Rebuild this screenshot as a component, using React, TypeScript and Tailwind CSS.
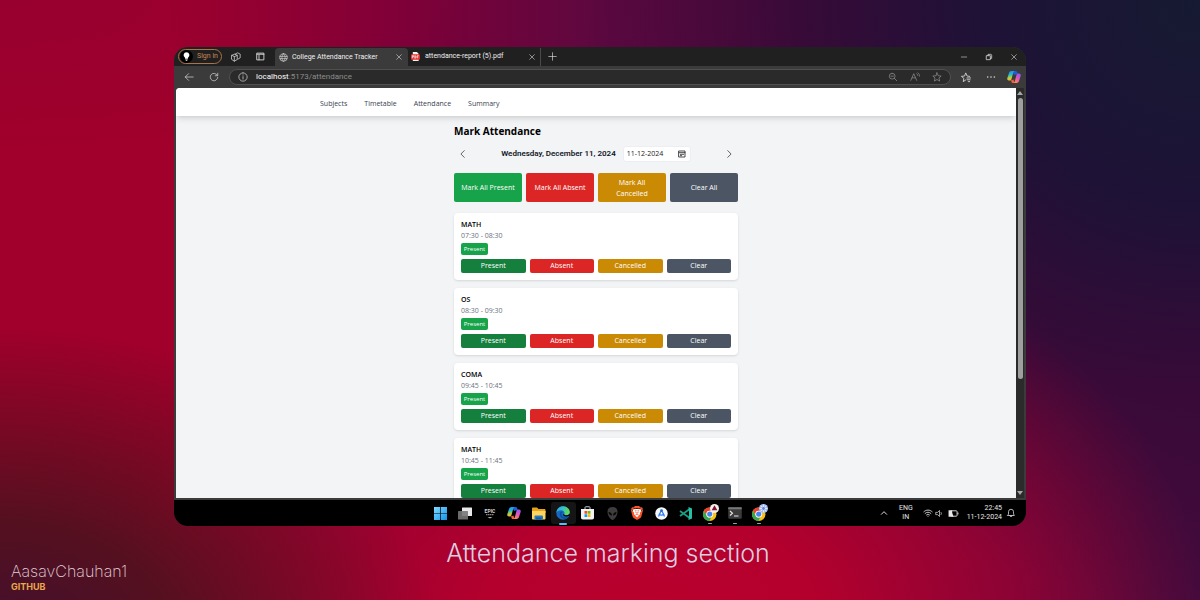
import type { ReactNode } from "react";
import { SiBrave } from "react-icons/si";

type Lecture = { subject: string; time: string };

const lectures: Lecture[] = [
  { subject: "MATH", time: "07:30 - 08:30" },
  { subject: "OS", time: "08:30 - 09:30" },
  { subject: "COMA", time: "09:45 - 10:45" },
  { subject: "MATH", time: "10:45 - 11:45" },
];

const links = ["Subjects", "Timetable", "Attendance", "Summary"];

function Line({ d, className = "size-[10px]", width = 1.8 }: { d: string; className?: string; width?: number }) {
  return (
    <svg viewBox="0 0 24 24" className={className} fill="none" stroke="currentColor" strokeWidth={width} strokeLinecap="round" strokeLinejoin="round" aria-hidden="true">
      <path d={d} />
    </svg>
  );
}

const paths = {
  close: "M5 5l14 14M19 5L5 19",
  plus: "M12 2v20M2 12h20",
  min: "M4 12h16",
  restore: "M5 8h11v12H5zM9 8V4h8a3 3 0 0 1 3 3v9h-4",
  back: "M22 12H3M11 4l-8 8 8 8",
  refresh: "M20 8A9 9 0 1 0 21 13M21 3v6h-6",
  info: "M12 2a10 10 0 1 0 0 20 10 10 0 0 0 0-20M12 11v6M12 7v.5",
  zoom: "M10 3a7 7 0 1 0 0 14 7 7 0 0 0 0-14M15 15l6 6M7 10h6",
  read: "M2 20L9 4l7 16M5 14h8M16 4c2 1 3 3 3 5M19 2c3 2 4 5 4 8",
  star: "M12 2l3 7 7 .7-5.300 4.800 1.600 7.300L12 18l-6.300 3.800 1.600-7.300L2 9.700 9 9z",
  favs: "M13 17l-6 4 1.500-7L3 9.500l7-.7L12.500 2l3 6.800 5.500.7M15 13h8M16 17h6M18 21h3",
  globe: "M12 2a10 10 0 1 0 0 20 10 10 0 0 0 0-20M2.500 9h19M2.500 15h19M12 2c-6 6-6 14 0 20M12 2c6 6 6 14 0 20",
  left: "M15 4l-8 8 8 8",
  right: "M9 4l8 8-8 8",
  up: "M4 16l8-8 8 8",
  bell: "M4 18h16l-2-4V9a6 6 0 0 0-12 0v5zM9.500 18.500a2.500 2.500 0 0 0 5 0",
  wifi: "M2 9c6-5.500 14-5.500 20 0M5 13c4-4 10-4 14 0M8.500 16.500c2-2 5-2 7 0M12 19.500v.5",
  sound: "M3 9h4l5-5v16l-5-5H3zM16 9c1.500 2 1.500 4 0 6",
  calendar: "M3 3h18v18H3zM3 8h18M7 13h10M7 17h4",
};

function Copilot({ id }: { id: string }) {
  return (
    <svg viewBox="0 0 28 28" className="size-[14px]" aria-hidden="true">
      <defs>
        <linearGradient id={`${id}a`} x1="0" y1="0" x2="0.2" y2="1">
          <stop offset="0" stopColor="#1c8af0" />
          <stop offset="0.45" stopColor="#25b8d0" />
          <stop offset="0.75" stopColor="#b5cf3c" />
          <stop offset="1" stopColor="#ffb02e" />
        </linearGradient>
        <linearGradient id={`${id}b`} x1="0.7" y1="0" x2="0.3" y2="1">
          <stop offset="0" stopColor="#8a5cf5" />
          <stop offset="0.5" stopColor="#e356b5" />
          <stop offset="1" stopColor="#ff8a4a" />
        </linearGradient>
      </defs>
      <path fill="#1b5fd8" d="M9 2h8c2 0 3 1 3.600 3l1 4h-5l-2 1z" />
      <path fill={`url(#${id}a)`} d="M9 2h6c-2 1-2.500 3-3 5l-3 11c-.6 2-1.500 3-3.500 3H4c-3 0-4-2.500-3.300-5L4 6c.8-2.500 2.500-4 5-4z" />
      <path fill="#f2613f" d="M11 26h8c-3 0-4-1-4.800-3l-1.400-4-5 2 1 2c.6 2 1 3 2.200 3z" />
      <path fill={`url(#${id}b)`} d="M19 26h-6c2-1 2.500-3 3-5l3-11c.6-2 1.500-3 3.500-3H24c3 0 4 2.500 3.300 5L24 22c-.8 2.500-2.500 4-5 4z" />
    </svg>
  );
}

function Chrome({ children }: { children: ReactNode }) {
  return (
    <svg viewBox="0 0 32 32" className="size-[18px]" aria-hidden="true">
      <g transform="translate(3 5)">
        <circle cx="12.500" cy="13" r="12" fill="#fbc116" />
        <path fill="#ea4335" d="M2.100 7A12 12 0 0 1 22.900 7H12.500a6 6 0 0 0-5.200 9z" />
        <path fill="#34a853" d="M2.100 7l5.200 9a6 6 0 0 0 8.200 2.200L12 25A12 12 0 0 1 2.100 7z" />
        <circle cx="12.500" cy="13" r="6" fill="#fff" />
        <circle cx="12.500" cy="13" r="4.600" fill="#4285f4" />
      </g>
      {children}
    </svg>
  );
}

const taskIcons: { name: string; icon: ReactNode; mark?: "active" | "open" }[] = [
  {
    name: "Start",
    icon: (
      <svg viewBox="0 0 26 26" className="size-[13px]">
        <defs>
          <linearGradient id="win" x1="0" y1="0" x2="1" y2="1">
            <stop offset="0" stopColor="#7fdcff" />
            <stop offset="1" stopColor="#1193ec" />
          </linearGradient>
        </defs>
        <path fill="url(#win)" d="M0 0h12.300v12.300H0zM13.700 0H26v12.300H13.700zM0 13.700h12.300V26H0zM13.700 13.700H26V26H13.700z" />
      </svg>
    ),
  },
  {
    name: "Task view",
    icon: (
      <svg viewBox="0 0 28 26" className="h-[13px] w-[14px]">
        <rect x="8" y="1" width="20" height="17" rx="1" fill="#e8e8e8" />
        <rect x="0" y="8" width="20" height="17" rx="1" fill="#777" opacity="0.9" />
      </svg>
    ),
  },
  {
    name: "Epic Games",
    icon: (
      <svg viewBox="0 0 24 28" className="h-[14px] w-[12px]">
        <text x="12" y="13" textAnchor="middle" fontSize="10" fontWeight="700" fill="#d6d6d6">
          EPIC
        </text>
        <path d="M4 17h16" stroke="#8a8a8a" strokeWidth="2.500" strokeDasharray="3 1" />
        <path d="M7 22h10l-5 3z" fill="#b0b0b0" />
      </svg>
    ),
  },
  { name: "Copilot", icon: <Copilot id="task" /> },
  {
    name: "File Explorer",
    icon: (
      <svg viewBox="0 0 28 26" className="h-[13px] w-[14px]">
        <path fill="#e5a31c" d="M0 3c0-1 1-2 2-2h8l3 3h12c1 0 2 1 2 2v6H0z" />
        <path fill="#ffd45c" d="M0 8h27v15c0 1-1 2-2 2H2c-1 0-2-1-2-2z" />
        <path fill="#2479c8" d="M5 19c0-1 1-2 2-2h13c1 0 2 1 2 2v6H5z" />
        <path fill="#175a9c" d="M8 21h11v4H8z" />
      </svg>
    ),
  },
  {
    name: "Edge",
    mark: "active",
    icon: (
      <svg viewBox="0 0 28 28" className="size-[14px]">
        <defs>
          <linearGradient id="edge" x1="0" y1="0" x2="1" y2="0.3">
            <stop offset="0" stopColor="#2aa8e8" />
            <stop offset="0.5" stopColor="#35c1c8" />
            <stop offset="1" stopColor="#62d957" />
          </linearGradient>
        </defs>
        <circle cx="14" cy="14" r="13.500" fill="#1668c0" />
        <path fill="url(#edge)" d="M.6 14C1 6 7 .5 14 .5S27.500 6 27.500 12c0 4-3 6.500-7 6.500-3 0-4.500-1-4-2.500 1-2 .5-6-4-7C7 8 2 10 .6 14z" />
        <path fill="#0d4f9e" d="M9 12c-4 5 0 13 8 14 4 .5 7-2 9-5-6 3-15 2-15-5 0-2 .8-3 2-4-1.500-1-3-1-4 0z" />
        <path fill="#000" d="M15 16c-2 2 1 5 5 5 3 0 6-1 8-3l-1-2c-2 2-4 2.500-7 2.500s-4-1-3.500-2.500z" />
      </svg>
    ),
  },
  {
    name: "Microsoft Store",
    icon: (
      <svg viewBox="0 0 26 28" className="h-[14px] w-[13px]">
        <path d="M8 7V3c0-1 .6-1.500 1.500-1.500h7c1 0 1.500.5 1.500 1.500v4" fill="none" stroke="#bfc9d4" strokeWidth="2" />
        <path fill="#f2f2f2" d="M0 6h26v17c0 2-1 4-4 4H4c-3 0-4-2-4-4z" />
        <path fill="#f25022" d="M7 10h5.500v5.500H7z" />
        <path fill="#7fba00" d="M13.500 10H19v5.500h-5.500z" />
        <path fill="#00a4ef" d="M7 16.500h5.500V22H7z" />
        <path fill="#ffb900" d="M13.500 16.500H19V22h-5.500z" />
      </svg>
    ),
  },
  {
    name: "Alienware",
    icon: (
      <svg viewBox="0 0 22 26" className="h-[13px] w-[11px]">
        <path fill="#3d3d3d" d="M11 0C4 0 1 4 1 10c0 7 6 15 10 16 4-1 10-9 10-16 0-6-3-10-10-10z" />
        <path fill="#080808" d="M3 10c4 0 7 3 7 7-4 0-7-3-7-7zM19 10c-4 0-7 3-7 7 4 0 7-3 7-7z" />
      </svg>
    ),
  },
  {
    name: "Brave",
    icon: (
      <span className="relative flex">
        <svg viewBox="0 0 24 24" className="absolute inset-0 size-[14px]">
          <path fill="#fff" d="M6 5h12l2 5-3 9-5 3-5-3-3-9z" />
        </svg>
        <SiBrave className="relative size-[14px] text-[#fb542b]" />
      </span>
    ),
  },
  {
    name: "Android Studio",
    icon: (
      <svg viewBox="0 0 26 26" className="size-[13px]">
        <circle cx="13" cy="13" r="12.500" fill="#f4f7fb" />
        <path fill="none" stroke="#2f7df0" strokeWidth="2.500" d="M13 6L7 19M13 6l6 13M7.500 14c3 3 8 3 11 0" />
        <circle cx="13" cy="7" r="2.600" fill="#2464c8" />
      </svg>
    ),
  },
  {
    name: "VS Code Insiders",
    icon: (
      <svg viewBox="0 0 26 26" className="size-[13px]">
        <path fill="none" stroke="#1b9c83" strokeWidth="3.600" strokeLinejoin="round" d="M20 5L2 18M20 21L2 8" />
        <path fill="#24bfa5" d="M19 0l7 3v20l-7 3v-6.500l1-.5V7l-1-.5z" />
      </svg>
    ),
  },
  {
    name: "Chrome",
    mark: "open",
    icon: (
      <Chrome>
        <circle cx="24" cy="8" r="8" fill="#f5eeee" />
        <path fill="#7d1233" d="M24 2l5 9H19z" />
      </Chrome>
    ),
  },
  {
    name: "Terminal",
    mark: "open",
    icon: (
      <svg viewBox="0 0 28 24" className="h-[12px] w-[14px]">
        <rect x="0.500" y="0.500" width="27" height="23" rx="2" fill="#3c3c3c" />
        <rect x="0.500" y="0.500" width="27" height="4" rx="1" fill="#777" />
        <path fill="none" stroke="#e8e8e8" strokeWidth="2.200" d="M4 8l5 4.500L4 17M12 18h9" />
      </svg>
    ),
  },
  {
    name: "Chrome profile",
    mark: "open",
    icon: (
      <Chrome>
        <circle cx="24" cy="8" r="8" fill="#a9bff0" />
        <path d="M24 1v14M17 8h14M19 3l10 10M29 3L19 13" stroke="#e3ebff" strokeWidth="1.600" />
        <circle cx="24" cy="8" r="2.500" fill="#5c80d8" />
      </Chrome>
    ),
  },
];

function IconButton({ label, className, children }: { label: string; className: string; children: ReactNode }) {
  return (
    <button type="button" aria-label={label} className={`flex shrink-0 items-center justify-center ${className}`}>
      {children}
    </button>
  );
}

function TabStrip() {
  return (
    <div className="flex h-[19px] shrink-0 items-center bg-[#202020] pl-1 text-[#d8d8d8]">
      <button type="button" className="flex h-[15px] w-11 shrink-0 items-center gap-1 rounded-full border border-[#a8744a] pl-px text-[7px] whitespace-nowrap text-[#c98a56]">
        <svg viewBox="0 0 24 24" className="size-[13px] shrink-0" aria-hidden="true">
          <circle cx="12" cy="12" r="12" fill="#000" />
          <path fill="#fff" d="M12 4a5.500 5.500 0 0 1 3 10l-.5 2h-5L9 14a5.500 5.500 0 0 1 3-10zM9.500 17.500h5L13 20h-2z" />
        </svg>
        Sign in
      </button>
      <IconButton label="Workspaces" className="ml-0.5 w-6">
        <Line d="M10 5l6-3 6 3v9l-5 3M2 8l7-3 6 3v10l-7 4-6-4zM2 8l6 3 7-3M8 11v11" />
      </IconButton>
      <IconButton label="Tab actions" className="w-6">
        <Line d="M3 3h18v18H3zM3 6h18M8 8v13" className="size-[9px]" width={2.4} />
      </IconButton>
      <div className="ml-[3px] flex h-[18px] w-[133px] items-center gap-1 self-end rounded-t-[4px] bg-[#3b3b3b] pr-[5px] pl-1">
        <Line d={paths.globe} className="size-[9px]" />
        <span className="text-[7px] whitespace-nowrap text-[#f0f0f0]">College Attendance Tracker</span>
        <IconButton label="Close tab" className="ml-auto">
          <Line d={paths.close} className="size-[8px]" />
        </IconButton>
      </div>
      <div className="flex h-[18px] w-[133px] items-center gap-[5px] border-r border-[#4a4a4a] pr-1 pl-[3px]">
        <svg viewBox="0 0 20 20" className="size-[9px] shrink-0" aria-hidden="true">
          <path fill="#f2f2f2" d="M4 0h9l4 4v16H4z" />
          <rect y="5" width="20" height="12" rx="2" fill="#e5322d" />
          <path stroke="#fff" strokeWidth="1.500" fill="none" d="M3 14V8h2.500v3H3M8.500 8v6c4 0 4-6 0-6zM14 14V8h3M14 11h2.500" />
        </svg>
        <span className="text-[7px] whitespace-nowrap text-[#f0f0f0]">attendance-report (5).pdf</span>
        <IconButton label="Close tab" className="ml-auto">
          <Line d={paths.close} className="size-[8px]" />
        </IconButton>
      </div>
      <IconButton label="New tab" className="w-[22px]">
        <Line d={paths.plus} className="size-[9px]" />
      </IconButton>
      <div className="ml-auto flex">
        <IconButton label="Minimize" className="w-[25px]">
          <Line d={paths.min} className="size-[8px]" />
        </IconButton>
        <IconButton label="Restore" className="w-[25px]">
          <Line d={paths.restore} className="size-[8px]" width={2.4} />
        </IconButton>
        <IconButton label="Close window" className="w-[25px]">
          <Line d={paths.close} className="size-[8px]" />
        </IconButton>
      </div>
    </div>
  );
}

function AddressBar() {
  return (
    <div className="flex h-[22px] shrink-0 items-center bg-[#3b3b3b] px-0.5 text-[#d0d0d0]">
      <IconButton label="Back" className="w-[25px]">
        <Line d={paths.back} />
      </IconButton>
      <IconButton label="Refresh" className="w-[25px]">
        <Line d={paths.refresh} />
      </IconButton>
      <div className="ml-[3px] flex h-4 min-w-0 flex-1 items-center rounded-full border border-[#505050] bg-[#2a2a2a] pr-0.5 pl-2 text-[#8c8c8c]">
        <Line d={paths.info} className="mr-2 size-[10px] shrink-0 text-[#d0d0d0]" />
        <span className="text-[8px] leading-3">
          <span className="text-white">localhost</span>:5173/attendance
        </span>
        <div className="ml-auto flex">
          <IconButton label="Zoom" className="w-[22px]">
            <Line d={paths.zoom} />
          </IconButton>
          <IconButton label="Read aloud" className="w-[22px]">
            <Line d={paths.read} />
          </IconButton>
          <IconButton label="Add to favorites" className="w-[22px]">
            <Line d={paths.star} />
          </IconButton>
        </div>
      </div>
      <IconButton label="Favorites" className="ml-0.5 w-[25px]">
        <Line d={paths.favs} className="size-[11px]" width={2} />
      </IconButton>
      <IconButton label="More" className="w-[25px]">
        <Line d="M4 12h.1M12 12h.1M20 12h.1" width={4} />
      </IconButton>
      <IconButton label="Copilot" className="w-[21px]">
        <Copilot id="bar" />
      </IconButton>
    </div>
  );
}

const actions = [
  { label: "Present", tone: "bg-[#15803d]" },
  { label: "Absent", tone: "bg-[#dc2626]" },
  { label: "Cancelled", tone: "bg-[#ca8a04]" },
  { label: "Clear", tone: "bg-[#4b5563]" },
];

const bulkActions = [
  { label: "Mark All Present", tone: "bg-[#16a34a]" },
  { label: "Mark All Absent", tone: "bg-[#dc2626]" },
  { label: "Mark All Cancelled", tone: "bg-[#ca8a04]" },
  { label: "Clear All", tone: "bg-[#4b5563]" },
];

function LectureCard({ subject, time }: Lecture) {
  return (
    <li className="rounded-[4px] bg-white p-[7px] shadow-sm">
      <h2 className="text-[7px] leading-[10px] font-semibold text-black">{subject}</h2>
      <p className="text-[7px] leading-[11px] text-[#6b7280]">{time}</p>
      <span className="mt-0.5 flex h-3 w-[27px] items-center justify-center rounded-[2px] bg-[#16a34a] text-[6px] text-white">Present</span>
      <div className="mt-1 grid grid-cols-4 gap-1">
        {actions.map((a) => (
          <button key={a.label} type="button" className={`h-[14px] rounded-[2px] text-[7px] leading-[14px] text-white ${a.tone}`}>
            {a.label}
          </button>
        ))}
      </div>
    </li>
  );
}

function Page() {
  return (
    <div className="min-w-0 flex-1 overflow-hidden rounded-tl-[4px] bg-[#f3f4f6]">
      <nav className="relative bg-white shadow-md">
        <div className="mx-auto flex h-7 max-w-[568px] items-center gap-[17px] px-2 pt-1 text-[7px] text-[#374151]">
          {links.map((l) => (
            <a key={l} href={`#${l.toLowerCase()}`}>
              {l}
            </a>
          ))}
        </div>
      </nav>
      <main className="mx-auto max-w-[284px] pt-2">
        <h1 className="text-[10px] leading-[14px] font-bold text-black">Mark Attendance</h1>
        <div className="mt-2 flex items-center justify-between">
          <IconButton label="Previous day" className="w-[18px] text-[#333]">
            <Line d={paths.left} />
          </IconButton>
          <div className="flex items-center gap-[7px]">
            <label htmlFor="day" className="font-['Roboto','Open_Sans',sans-serif] text-[8px] leading-4 font-semibold whitespace-nowrap text-[#111827]">
              Wednesday, December 11, 2024
            </label>
            <div className="flex h-4 w-[68px] items-center rounded-[3px] border border-[#eceef1] bg-white pr-1 pl-[3px]">
              <input id="day" defaultValue="11-12-2024" className="w-0 min-w-0 flex-1 text-[7px] leading-3 text-[#222] outline-none" />
              <IconButton label="Open calendar" className="text-[#222]">
                <Line d={paths.calendar} className="size-[8px]" width={2.4} />
              </IconButton>
            </div>
          </div>
          <IconButton label="Next day" className="w-[18px] text-[#333]">
            <Line d={paths.right} />
          </IconButton>
        </div>
        <div className="mt-[11px] grid grid-cols-4 gap-1">
          {bulkActions.map((a) => (
            <button key={a.label} type="button" className={`h-[29px] rounded-[2px] px-1.5 text-[7px] leading-[11px] text-white ${a.tone}`}>
              {a.label}
            </button>
          ))}
        </div>
        <ul className="mt-[11px] flex flex-col gap-2">
          {lectures.map((l) => (
            <LectureCard key={l.time} {...l} />
          ))}
        </ul>
      </main>
    </div>
  );
}

function ScrollTrack() {
  return (
    <div className="flex w-2 shrink-0 flex-col items-center bg-[#2b2b2b] py-[3px]" aria-hidden="true">
      <svg viewBox="0 0 6 4" className="h-1 w-1.5 shrink-0">
        <path d="M3 0l3 4H0z" fill="#a8a8a8" />
      </svg>
      <div className="flex w-full flex-1 flex-col items-center py-[3px]">
        <div className="h-[72%] w-[5px] rounded-full bg-[#9f9f9f]" />
      </div>
      <svg viewBox="0 0 6 4" className="h-1 w-1.5 shrink-0">
        <path d="M3 4L0 0h6z" fill="#a8a8a8" />
      </svg>
    </div>
  );
}

function Taskbar() {
  return (
    <div className="grid h-[26px] shrink-0 grid-cols-[1fr_343px_1fr] items-center bg-black text-[#e8e8e8]">
      <div className="col-start-2 flex h-full items-center">
        {taskIcons.map((t) => (
          <button key={t.name} type="button" aria-label={t.name} className={`relative flex h-[22px] flex-1 items-center justify-center rounded-[3px] ${t.mark === "active" ? "bg-[#151515]" : ""}`}>
            {t.icon}
            {t.mark === "active" && <span className="absolute -bottom-px h-0.5 w-2 rounded-full bg-[#5bbcf5]" />}
            {t.mark === "open" && <span className="absolute bottom-0 h-px w-1 rounded-full bg-[#a0a0a0]" />}
          </button>
        ))}
      </div>
      <div className="flex items-center justify-end pr-2.5 text-[7px] leading-[9px]">
        <Line d={paths.up} className="mr-[11px] size-[8px]" width={2.8} />
        <span className="mr-2.5 text-center">
          ENG
          <br />
          IN
        </span>
        <Line d={paths.wifi} className="mr-0.5 size-[10px]" width={2} />
        <Line d={paths.sound} className="mr-1 size-[9px]" />
        <svg viewBox="0 0 24 20" className="mr-2 h-[9px] w-[11px]" aria-hidden="true">
          <rect x="6" y="4" width="14" height="12" rx="2" fill="none" stroke="#e8e8e8" strokeWidth="2" />
          <path d="M22 8v4" stroke="#e8e8e8" strokeWidth="2" />
          <path d="M1 3h8v5L12 17H1z" fill="#e8e8e8" />
        </svg>
        <span className="mr-1 text-right whitespace-nowrap">
          22:45
          <br />
          11-12-2024
        </span>
        <Line d={paths.bell} className="size-[10px]" />
      </div>
    </div>
  );
}

export default function App() {
  return (
    <div className="flex h-screen flex-col bg-[radial-gradient(ellipse_440px_320px_at_0%_108%,#40102f_0%,#55101f_40%,transparent_100%),radial-gradient(ellipse_560px_420px_at_54%_105%,#ba002d_0%,#b4002d_30%,transparent_100%),radial-gradient(ellipse_620px_600px_at_100%_0%,#161a32_0%,#1e1236_35%,#380a38_65%,transparent_100%),radial-gradient(ellipse_500px_150px_at_0%_0%,#90003580_0%,transparent_100%),linear-gradient(90deg,#a0002b_0%,#a0002b_14%,#7c0038_34%,#5e0840_50%,#66063c_84%,#480a3c_96%,#440a3c_100%)] pt-[47px] font-['Open_Sans','Noto_Sans',sans-serif]">
      <section className="mx-auto flex min-h-0 w-[71%] flex-1 flex-col overflow-hidden rounded-[14px] bg-[#3b3b3b]">
        <div className="shrink-0 font-['Roboto','Open_Sans',sans-serif]">
          <TabStrip />
          <AddressBar />
        </div>
        <div className="mx-0.5 mb-0.5 flex min-h-0 flex-1">
          <Page />
          <ScrollTrack />
        </div>
        <div className="shrink-0 font-['Roboto','Open_Sans',sans-serif]">
          <Taskbar />
        </div>
      </section>
      <footer className="grid h-[74px] shrink-0 grid-cols-[1fr_auto_1fr] font-['Inter',sans-serif]">
        <div className="self-end pb-[7px] pl-[11px]">
          <p className="text-[16px] leading-5 font-extralight text-[#e2d5da]">AasavChauhan1</p>
          <p className="text-[9px] leading-3 font-bold text-[#e8a94a]">GITHUB</p>
        </div>
        <p className="pt-[11px] pl-4 text-[25px] leading-8 font-light text-[#dccfe0]">Attendance marking section</p>
      </footer>
    </div>
  );
}
